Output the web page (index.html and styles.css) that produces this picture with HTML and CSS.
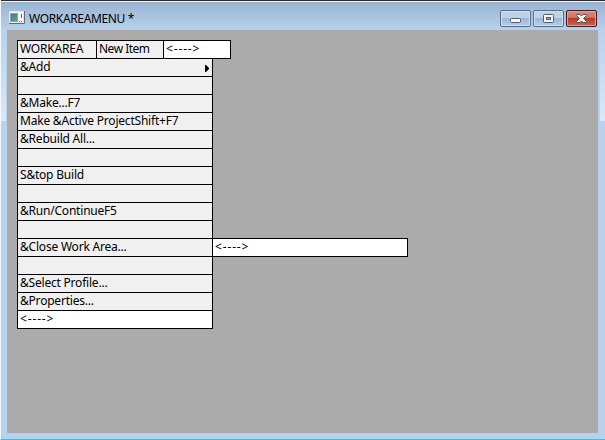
FILE: index.html
```
<!DOCTYPE html>
<html lang="en">
<head>
<meta charset="utf-8">
<title>WORKAREAMENU</title>
<link rel="stylesheet" href="styles.css">
</head>
<body>
<div class="window">
  <header class="titlebar">
    <svg class="app-icon" width="16" height="14" viewBox="0 0 16 14">
      <defs><linearGradient id="pic" x2="1" y2="1"><stop stop-color="#4b719a"/><stop offset="1" stop-color="#54ae78"/></linearGradient></defs>
      <path d="M.5 .5h14v11H.5z" fill="#f4f4f4" stroke="#e3e9ee"/>
      <path d="M0 12.500h15.500V0" fill="none" stroke="#5f6c7b"/>
      <path d="M1.500 2.500h7v8h-7z" fill="url(#pic)" stroke="#8ba6b3"/>
      <path d="M12 3h1v4h-1zM10 10h1v1h-1zM12 10h1v1h-1z" fill="#65717e"/>
    </svg>
    <h1 class="title">WORKAREAMENU *</h1>
    <div class="controls">
      <svg class="control" width="31" height="17" viewBox="1 1 29 15">
        <rect x="10.500" y="8.500" width="10" height="4" rx="1" fill="#f5f5f5" stroke="#535c70"/>
      </svg>
      <svg class="control" width="31" height="17" viewBox="1 1 29 15">
        <rect x="10.500" y="4.500" width="10" height="8" rx="1" fill="#f5f5f5" stroke="#535c70"/>
        <rect x="13.500" y="7.500" width="4" height="2" fill="#91b1d0" stroke="#535c70"/>
      </svg>
      <svg class="control close" width="31" height="17" viewBox="1 1 29 15">
        <path d="M10.500 4.500h3.500l1.500 1.500 1.500-1.500h3.500v1l-3 3 3 3v1H17l-1.500-1.500-1.500 1.500h-3.500v-1l3-3-3-3z" fill="#f5f5f5" stroke="#535666"/>
      </svg>
    </div>
  </header>
  <main class="client">
    <nav class="menubar">
      <div class="cell bar-main"><span>WORKAREA</span></div>
      <div class="cell bar-new"><span>New Item</span></div>
      <div class="cell bar-slot slot"><span class="arrow">&lt;----&gt;</span></div>
    </nav>
    <div class="menu">
      <div class="cell"><span>&amp;Add</span><svg class="expand" width="4" height="7" viewBox="0 0 4 7"><path d="M0 0h1l3 3v1L1 7H0z"/></svg></div>
      <div class="cell"></div>
      <div class="cell"><span>&amp;Make...F7</span></div>
      <div class="cell"><span>Make &amp;Active ProjectShift+F7</span></div>
      <div class="cell"><span>&amp;Rebuild All...</span></div>
      <div class="cell"></div>
      <div class="cell"><span>S&amp;top Build</span></div>
      <div class="cell"></div>
      <div class="cell"><span>&amp;Run/ContinueF5</span></div>
      <div class="cell"></div>
      <div class="cell parent"><span>&amp;Close Work Area...</span>
        <div class="cell slot submenu"><span class="arrow">&lt;----&gt;</span></div>
      </div>
      <div class="cell"></div>
      <div class="cell"><span>&amp;Select Profile...</span></div>
      <div class="cell"><span>&amp;Properties...</span></div>
      <div class="cell slot"><span class="arrow">&lt;----&gt;</span></div>
    </div>
  </main>
</div>
</body>
</html>
```
FILE: styles.css
```
* { box-sizing: border-box; }
body { margin: 0; background: #b9d1ea; }
.window {
  width: 605px;
  height: 440px;
  padding: 0 7px 6px 6px;
  border-left: 1px solid #f3f8fc;
  border-bottom: 1px solid #42bcdc;
  background:
    linear-gradient(#2e2b33, #2e2b33) 0 0 / 100% 1px no-repeat,
    linear-gradient(#f1f5fa, #f1f5fa) 0 1px / 100% 1px no-repeat,
    linear-gradient(#99b4d2, #b9d1ea) 0 2px / 100% 28px no-repeat,
    linear-gradient(#b9d1ea, #dce8f5) 0 30px / 5px 91px no-repeat,
    linear-gradient(#b9d1ea, #dce8f5) 100% 30px / 5px 91px no-repeat,
    #b9d1ea;
  font: 12px/17px "Noto Sans", "Open Sans", sans-serif;
  color: #000;
}
.titlebar { display: flex; height: 30px; }
.app-icon { margin: 11px 0 0 2px; }
.title { margin: 10px 0 0 4px; font-size: 12px; font-weight: 400; line-height: 17px; letter-spacing: -.35px; white-space: nowrap; }
.controls { display: flex; gap: 2px; margin: 10px 1px 0 auto; }
.control {
  border: 1px solid #586b8a;
  border-radius: 2px;
  box-shadow: inset 0 0 0 1px #d0e0f0;
  background: linear-gradient(#bdd2e8 0 47%, #9bb8d6 50%, #b5cee7);
}
.close {
  border-color: #471522;
  box-shadow: inset 0 0 0 1px #dda499;
  background: linear-gradient(#d98c7d 0, #cf705f 47%, #b93a23 50%, #cc6750);
}
.client { height: 403px; padding: 10px; background: #ababab; }
.menubar { display: flex; width: 214px; border: solid #000; border-width: 1px 0 0 1px; }
.menu { width: 196px; border-left: 1px solid #000; }
.cell {
  display: flex;
  align-items: flex-start;
  height: 18px;
  padding-left: 2px;
  border: solid #000;
  border-width: 0 1px 1px 0;
  background: #f0f0f0;
  line-height: 15px;
  letter-spacing: -.21px;
  white-space: nowrap;
}
.bar-main { width: 79px; }
.bar-new { width: 67px; letter-spacing: -.5px; }
.bar-slot { width: 67px; }
.slot { background: #fff; }
.arrow { letter-spacing: .85px; }
.expand { margin: 6px 3px 0 auto; }
.parent { position: relative; }
.submenu { position: absolute; left: 100%; top: -1px; width: 196px; height: 19px; border-width: 1px; }
```
